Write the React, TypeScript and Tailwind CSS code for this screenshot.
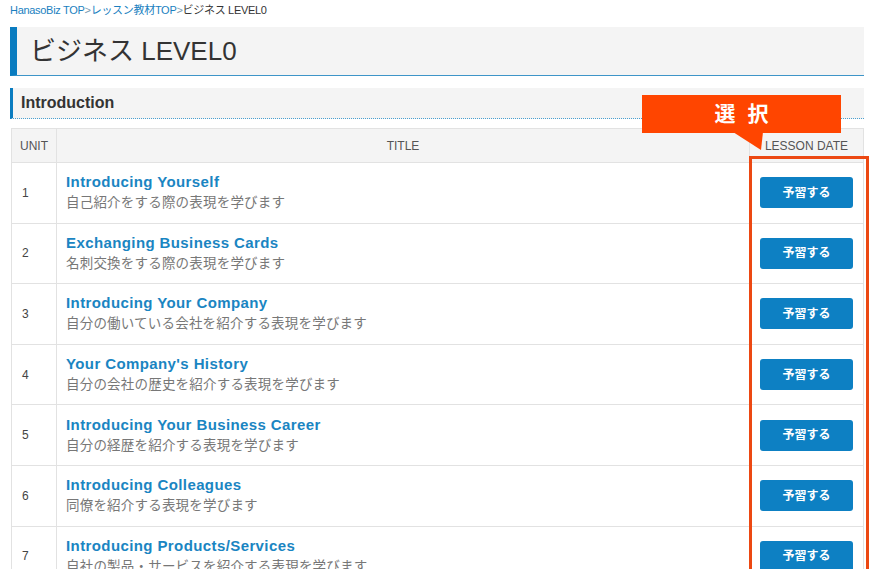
const LESSONS = [
  { unit: 1, title: 'Introducing Yourself', desc: '自己紹介をする際の表現を学びます' },
  { unit: 2, title: 'Exchanging Business Cards', desc: '名刺交換をする際の表現を学びます' },
  { unit: 3, title: 'Introducing Your Company', desc: '自分の働いている会社を紹介する表現を学びます' },
  { unit: 4, title: "Your Company's History", desc: '自分の会社の歴史を紹介する表現を学びます' },
  { unit: 5, title: 'Introducing Your Business Career', desc: '自分の経歴を紹介する表現を学びます' },
  { unit: 6, title: 'Introducing Colleagues', desc: '同僚を紹介する表現を学びます' },
  { unit: 7, title: 'Introducing Products/Services', desc: '自社の製品・サービスを紹介する表現を学びます' },
]

const FONT = "font-['Liberation_Sans','Noto_Sans_CJK_JP',sans-serif]"

export default function App() {
  return (
    <main className={`relative w-[874px] h-[569px] overflow-hidden bg-white text-[#333] ${FONT}`}>
      {/* Breadcrumb */}
      <div className="px-[10px] pt-[3px] h-[20px] text-[11px] leading-[14px] tracking-[-0.3px]">
        <span className="text-[#1a7fbf]">HanasoBiz TOP</span>
        <span className="text-[#7a9ab0]">&gt;</span>
        <span className="text-[#1a7fbf]">レッスン教材TOP</span>
        <span className="text-[#7a9ab0]">&gt;</span>
        <span className="text-[#333]">ビジネス LEVEL0</span>
      </div>

      {/* Page heading */}
      <div className="ml-[10px] mt-[7px] w-[854px] h-[49px] flex items-center bg-[#f4f4f4] border-l-[7px] border-[#0a7cc0] border-b border-b-[#3d95c8] pl-[13px]">
        <h1 className="text-[26px] leading-none text-[#333]">ビジネス LEVEL0</h1>
      </div>

      {/* Section heading */}
      <div className="ml-[10px] mt-[12px] w-[854px] h-[31px] flex items-center bg-[#f4f4f4] border-l-[3px] border-solid border-[#0a7cc0] border-b [border-bottom-style:dotted] border-b-[#4aa0d0] pl-[8px]">
        <h2 className="text-[16px] font-bold text-[#333]">Introduction</h2>
      </div>

      {/* Table */}
      <table className="ml-[11px] mt-[9px] w-[853px] border-collapse text-[13px]">
        <thead>
          <tr className="h-[34px] bg-[#f4f4f4] text-[#555] text-[12px]">
            <th className="w-[45px] border border-[#e2e2e2] font-normal">UNIT</th>
            <th className="border border-[#e2e2e2] font-normal">TITLE</th>
            <th className="w-[114px] border border-[#e2e2e2] font-normal">LESSON DATE</th>
          </tr>
        </thead>
        <tbody>
          {LESSONS.map(l => (
            <tr key={l.unit} className="h-[60.6px]">
              <td className="border border-[#e2e2e2] pl-[10px] text-[12px] text-[#444]">{l.unit}</td>
              <td className="border border-[#e2e2e2] pl-[9px]">
                <div className="text-[15px] font-bold leading-[20px] tracking-[0.4px] text-[#1a85c2]">{l.title}</div>
                <div className="text-[13.5px] leading-[21px] tracking-[0.2px] text-[#777]">{l.desc}</div>
              </td>
              <td className="border border-[#e2e2e2] text-center">
                <button className="w-[93px] h-[31px] rounded-[3px] bg-[#0d80c3] text-white text-[12px] font-bold">
                  予習する
                </button>
              </td>
            </tr>
          ))}
        </tbody>
      </table>

      {/* Highlight box over LESSON DATE column */}
      <div className="absolute left-[749px] top-[156px] w-[120px] h-[430px] border-[3px] border-[#ec4812]" />

      {/* Callout */}
      <div className="absolute left-[642px] top-[95px] w-[199px] h-[38px] bg-[#ff4500] flex items-center justify-center">
        <span className="text-white text-[21px] font-bold tracking-[12px] pl-[12px]">選択</span>
      </div>
      <svg className="absolute left-[733px] top-[132px]" width="30" height="19" viewBox="0 0 30 19">
        <polygon points="0,0 30,0 28,18" fill="#ff4500" />
      </svg>
    </main>
  )
}
